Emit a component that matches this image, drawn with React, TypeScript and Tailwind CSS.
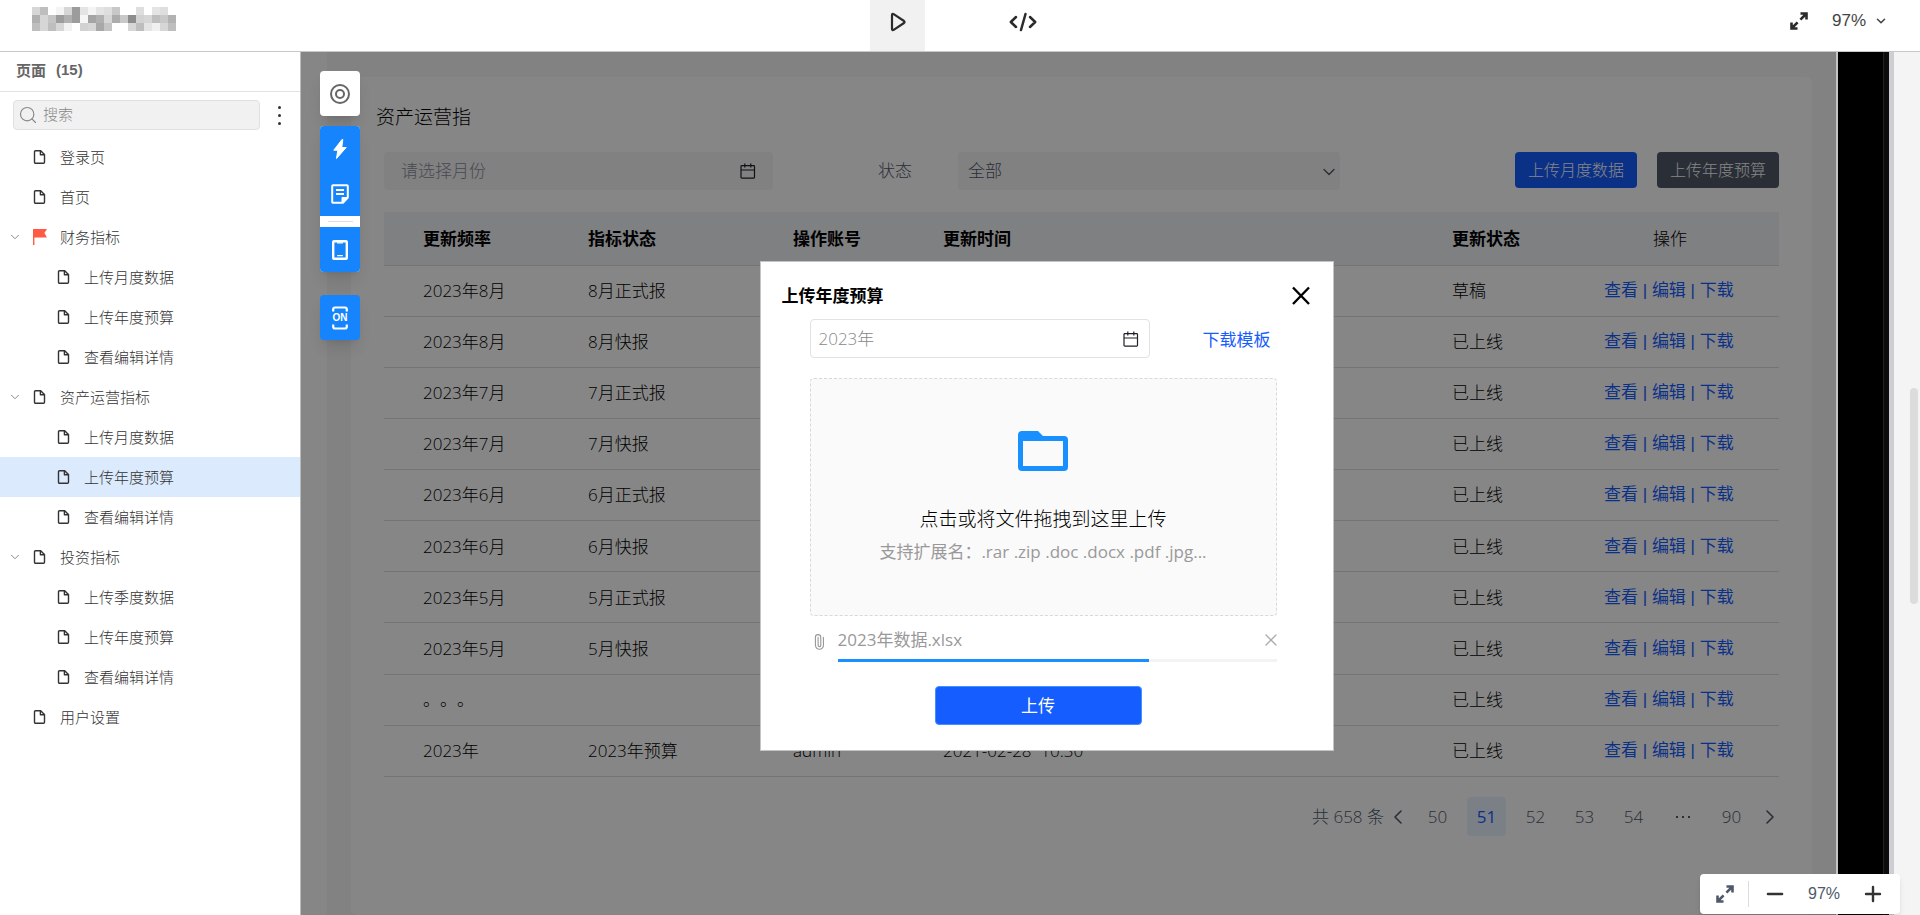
import { ChevronDown, ChevronLeft, ChevronRight, Minus, Paperclip, Plus, Search, X } from 'lucide-react';

type PageItem = {
  name: string;
  level: number;
  open?: boolean;
  flag?: boolean;
  active?: boolean;
};

const pages: PageItem[] = [
  { name: '登录页', level: 0 },
  { name: '首页', level: 0 },
  { name: '财务指标', level: 0, open: true, flag: true },
  { name: '上传月度数据', level: 1 },
  { name: '上传年度预算', level: 1 },
  { name: '查看编辑详情', level: 1 },
  { name: '资产运营指标', level: 0, open: true },
  { name: '上传月度数据', level: 1 },
  { name: '上传年度预算', level: 1, active: true },
  { name: '查看编辑详情', level: 1 },
  { name: '投资指标', level: 0, open: true },
  { name: '上传季度数据', level: 1 },
  { name: '上传年度预算', level: 1 },
  { name: '查看编辑详情', level: 1 },
  { name: '用户设置', level: 0 },
];

const rows = [
  { period: '2023年8月', type: '8月正式报', status: '草稿' },
  { period: '2023年8月', type: '8月快报', status: '已上线' },
  { period: '2023年7月', type: '7月正式报', status: '已上线' },
  { period: '2023年7月', type: '7月快报', status: '已上线' },
  { period: '2023年6月', type: '6月正式报', status: '已上线' },
  { period: '2023年6月', type: '6月快报', status: '已上线' },
  { period: '2023年5月', type: '5月正式报', status: '已上线' },
  { period: '2023年5月', type: '5月快报', status: '已上线' },
  { period: '。。。', type: '', status: '已上线' },
  { period: '2023年', type: '2023年预算', user: 'admin', time: '2021-02-28  10:30', status: '已上线' },
];

// grey level of each 8px tile in the masked project name
const mosaic = [
  [214, 190, 255, 244, 214, 156, 228, 244, 228, 222, 200, 255, 255, 222, 255, 228, 222, 255],
  [176, 214, 196, 156, 176, 156, 246, 164, 176, 214, 172, 200, 140, 210, 214, 190, 200, 178],
  [190, 214, 190, 214, 242, 255, 210, 214, 168, 196, 255, 255, 214, 190, 228, 240, 214, 190],
];

function FileIcon() {
  return (
    <svg viewBox="0 0 14 16" className="w-3.5 h-4 shrink-0" fill="none" stroke="#333" strokeWidth="1.4" strokeLinejoin="round">
      <path d="M3.500 1.800h5.200l3.800 3.600v7.900a1 1 0 0 1-1 1h-8a1 1 0 0 1-1-1V2.800a1 1 0 0 1 1-1z" />
      <path d="M8.400 2v3.800h3.800" />
    </svg>
  );
}

function FlagIcon() {
  return (
    <svg viewBox="0 0 16 16" className="w-4 h-4 shrink-0" fill="#ff5a43">
      <path d="M1 0h14l-2.600 4L15 8.400H2.400V16H1z" />
    </svg>
  );
}

function CalendarIcon() {
  return (
    <svg viewBox="0 0 16 16" className="w-4 h-4 shrink-0" fill="none" stroke="#1d2129" strokeWidth="1.2">
      <rect x="1" y="2.600" width="13.500" height="12.500" rx="0.8" />
      <path d="M1 7h13.500M4.800 0.500v4M10.800 0.500v4" />
    </svg>
  );
}

function ExpandIcon({ color }: { color: string }) {
  return (
    <svg viewBox="0 0 18 18" className="w-[18px] h-[18px]" fill="none" stroke={color} strokeWidth="2.6">
      <path d="M10.500 1.500h6v6M16 2l-5.600 5.600M7.500 16.500h-6v-6M2 16l5.600-5.600" />
    </svg>
  );
}

function TopBar() {
  return (
    <header className="flex items-start h-[52px] shrink-0 bg-white border-b border-[#c8c8c8]">
      <div className="flex-1 pl-8 pt-[7px]">
        <div className="w-36">
          {mosaic.map((line, y) => (
            <div key={y} className="flex">
              {line.map((v, x) => (
                <span key={x} className="w-2 h-2" style={{ backgroundColor: `rgb(${v},${v},${v})` }} />
              ))}
            </div>
          ))}
        </div>
      </div>
      <div className="flex gap-[70px] h-full">
        <button aria-label="预览" className="w-[55px] h-full pb-2 flex items-center justify-center bg-[#f1f1f1]">
          <svg viewBox="0 0 18 20" className="w-[18px] h-5" fill="none" stroke="#2b2b2b" strokeWidth="2.2" strokeLinejoin="round">
            <path d="M3 3.200Q3 1.200 4.700 2.200L15 9Q16.200 10 15 11L4.700 17.800Q3 18.800 3 16.800z" />
          </svg>
        </button>
        <button aria-label="代码" className="w-[55px] h-full pb-2 flex items-center justify-center">
          <svg viewBox="0 0 28 20" className="w-7 h-5" fill="none" stroke="#2b2b2b" strokeWidth="2.500" strokeLinecap="round" strokeLinejoin="round">
            <path d="M7 5L1.800 10L7 15M21 5l5.200 5L21 15M16.500 2l-4.500 16" />
          </svg>
        </button>
      </div>
      <div className="flex-1 flex justify-end items-center h-[42px] pr-8 text-[17px] text-[#444]">
        <ExpandIcon color="#2b2b2b" />
        <span className="ml-6 font-['Liberation_Sans',sans-serif]">97%</span>
        <ChevronDown className="w-3.5 h-3.5 ml-2" strokeWidth={2.600} />
      </div>
    </header>
  );
}

function Sidebar() {
  return (
    <aside className="w-[301px] shrink-0 bg-white border-r border-[#bbb] text-[15px] text-[#333]">
      <h2 className="h-10 pl-4 pb-0.5 flex items-center border-b border-[#e3e3e3] font-bold text-[#666] gap-2.5">
        <span>页面</span>
        <span className="font-['Liberation_Sans',sans-serif]">(15)</span>
      </h2>
      <div className="flex items-center pl-[13px] pt-2 mb-[7px] gap-[18px]">
        <label className="w-[247px] h-[30px] flex items-center gap-1 px-1 bg-[#f1f1f1] border border-[#e0e0e0] rounded-sm">
          <Search className="w-5 h-5 shrink-0 text-[#888]" strokeWidth={1.400} />
          <input aria-label="搜索" placeholder="搜索" className="w-full pl-px pb-0.5 outline-none font-light placeholder-[#888]" />
        </label>
        <button aria-label="更多" className="flex flex-col gap-[5px]">
          <span className="w-[3px] h-[3px] rounded-full bg-[#333]" />
          <span className="w-[3px] h-[3px] rounded-full bg-[#333]" />
          <span className="w-[3px] h-[3px] rounded-full bg-[#333]" />
        </button>
      </div>
      <nav>
        {pages.map((p, i) => (
          <a
            key={i}
            href="#"
            className={`flex items-center h-10 font-light ${p.level ? 'pl-14' : 'pl-2'} ${p.active ? 'bg-[#dbeafd]' : ''}`}
          >
            {p.level === 0 && (
              <span className="w-6 shrink-0">{p.open && <ChevronDown className="w-3.5 h-3.5 text-[#888]" strokeWidth={1.700} />}</span>
            )}
            <span className="w-7 shrink-0">{p.flag ? <FlagIcon /> : <FileIcon />}</span>
            {p.name}
          </a>
        ))}
      </nav>
    </aside>
  );
}

function IndicatorPage() {
  return (
    <div className="flex h-full bg-white">
      <div className="w-[26px] shrink-0" />
      <div className="flex-1 bg-[#f7f8fa] px-6 pt-[25px]">
        <main className="h-full bg-white rounded-md px-[33px] pt-6 text-[17px] font-light text-black">
          <h1 className="-ml-2 text-[19px] leading-8">资产运营指</h1>
          <div className="mt-[19px] flex items-center">
            <label className="w-[389px] h-[38px] px-[17px] flex items-center bg-[#f5f5f6] rounded-sm">
              <input aria-label="月份" placeholder="请选择月份" className="flex-1 outline-none placeholder-[#86909c]" />
              <CalendarIcon />
            </label>
            <label htmlFor="status" className="ml-[105px] w-20 text-[#4e5969]">状态</label>
            <div className="relative w-[382px]">
              <select id="status" className="w-full h-[38px] pl-2.5 appearance-none bg-[#f5f5f6] text-[#4e5969] rounded-sm">
                <option>全部</option>
              </select>
              <ChevronDown className="absolute right-px top-2.5 w-5 h-5 text-[#4e5969]" strokeWidth={1.600} />
            </div>
            <button className="ml-auto mb-0.5 w-[122px] h-9 bg-[#165dff] text-white text-[16px] rounded">上传月度数据</button>
            <button className="ml-5 mb-0.5 w-[122px] h-9 bg-[#4e5969] text-white text-[16px] rounded">上传年度预算</button>
          </div>
          <table className="mt-[22px] w-full h-[565px] table-fixed border-collapse text-left">
            <colgroup>
              <col className="w-[204px]" />
              <col className="w-[205px]" />
              <col className="w-[150px]" />
              <col />
              <col className="w-[152px]" />
              <col className="w-[175px]" />
            </colgroup>
            <thead>
              <tr className="h-[53px] bg-[#f2f3f5] border-b border-[#dcdde0]">
                <th className="pl-[39px]">更新频率</th>
                <th>指标状态</th>
                <th>操作账号</th>
                <th>更新时间</th>
                <th>更新状态</th>
                <th className="pl-[49px] font-light">操作</th>
              </tr>
            </thead>
            <tbody>
              {rows.map((r, i) => (
                <tr key={i} className="border-b border-[#dcdde0]">
                  <td className="pl-[39px] [text-spacing-trim:space-all]">{r.period}</td>
                  <td>{r.type}</td>
                  <td>{r.user}</td>
                  <td className="whitespace-pre">{r.time}</td>
                  <td>{r.status}</td>
                  <td className="text-[#165dff] font-normal whitespace-nowrap font-['Liberation_Sans','Noto_Sans_CJK_SC',sans-serif]">
                    <a href="#">查看</a> | <a href="#">编辑</a> | <a href="#">下载</a>
                  </td>
                </tr>
              ))}
            </tbody>
          </table>
          <div className="mt-5 flex items-center justify-end gap-2.5 text-[#4e5969]">
            <span className="-mr-1.5">共 658 条</span>
            <button aria-label="上一页" className="w-5 flex justify-center"><ChevronLeft className="w-6 h-6 shrink-0" strokeWidth={1.600} /></button>
            <button className="w-[39px] h-[39px]">50</button>
            <button className="w-[39px] h-[39px] rounded-sm bg-[#e8f3ff] text-[#165dff] font-normal">51</button>
            <button className="w-[39px] h-[39px]">52</button>
            <button className="w-[39px] h-[39px]">53</button>
            <button className="w-[39px] h-[39px]">54</button>
            <span className="w-[39px] flex justify-center gap-1">
              <i className="w-0.5 h-0.5 bg-[#4e5969]" />
              <i className="w-0.5 h-0.5 bg-[#4e5969]" />
              <i className="w-0.5 h-0.5 bg-[#4e5969]" />
            </span>
            <button className="w-[39px] h-[39px]">90</button>
            <button aria-label="下一页" className="w-[18px] flex justify-center"><ChevronRight className="w-6 h-6 shrink-0" strokeWidth={1.600} /></button>
          </div>
        </main>
      </div>
    </div>
  );
}

function UploadDialog() {
  return (
    <div role="dialog" aria-label="上传年度预算" className="w-[574px] pl-[21px] pr-5 pt-[19px] pb-[25px] bg-white border border-[#c4c4c4] text-[17px] font-light">
      <div className="flex items-center justify-between h-[30px]">
        <h2 className="font-bold text-black">上传年度预算</h2>
        <button aria-label="关闭">
          <svg viewBox="0 0 24 24" className="w-6 h-6" fill="none" stroke="#000" strokeWidth="2.4">
            <path d="M4 3.500L20 20M20 3.500L4 20" />
          </svg>
        </button>
      </div>
      <div className="pl-7 pr-9">
        <div className="mt-2 flex items-center justify-between pr-1.5">
          <label className="w-[340px] h-[39px] pl-2 pr-2.5 flex items-center border border-[#e2e2e2] rounded">
            <input aria-label="年份" defaultValue="2023年" className="flex-1 outline-none text-[#888]" />
            <CalendarIcon />
          </label>
          <a href="#" className="pt-0.5 text-[#165dff] font-normal">下载模板</a>
        </div>
        <button className="mt-5 w-full h-[238px] flex flex-col items-center bg-[#fafafa] border border-dashed border-[#d9d9d9] rounded">
          <svg viewBox="0 0 50 40" className="w-[50px] h-10 mt-[52px]" fill="#1890ff" fillRule="evenodd">
            <path d="M4 0h16l5 5h21a4 4 0 0 1 4 4v27a4 4 0 0 1-4 4H4a4 4 0 0 1-4-4V4a4 4 0 0 1 4-4zM5 10v25h40V10z" />
          </svg>
          <span className="mt-8 text-[19px] leading-8 text-black">点击或将文件拖拽到这里上传</span>
          <span className="leading-[34px] font-normal text-[#999]">支持扩展名：.rar .zip .doc .docx .pdf .jpg...</span>
        </button>
        <div className="flex pt-2">
          <Paperclip className="w-4 h-4 ml-px mr-[11px] mt-2.5 -rotate-45 text-[#999]" strokeWidth={1.700} />
          <div className="flex-1">
            <div className="flex items-center justify-between h-[31px] font-normal text-[#999]">
              2023年数据.xlsx
              <button aria-label="移除"><X className="w-5 h-5 -mr-1 text-[#aaa]" strokeWidth={1.500} /></button>
            </div>
            <div className="mt-1 h-[3px] bg-[#f3f3f3]">
              <div className="h-full bg-[#1890ff]" style={{ width: '71%' }} />
            </div>
          </div>
        </div>
        <button className="block mt-6 ml-[125px] w-[207px] h-[39px] bg-[#165dff] border border-[#3f92ff] text-white font-normal rounded">上传</button>
      </div>
    </div>
  );
}

function FloatingTools() {
  return (
    <div className="absolute left-[19px] top-[19px] w-10 flex flex-col">
      <button aria-label="定位" className="h-[45px] flex items-center justify-center bg-white rounded-sm shadow-lg">
        <svg viewBox="0 0 20 20" className="w-5 h-5" fill="none" stroke="#666" strokeWidth="2">
          <circle cx="10" cy="10" r="9" />
          <circle cx="10" cy="10" r="4" />
        </svg>
      </button>
      <div className="mt-2.5 flex flex-col bg-white rounded-sm shadow-lg overflow-hidden">
        <button aria-label="交互" className="h-[45px] flex items-center justify-center bg-[#1684fc]">
          <svg viewBox="0 0 14 20" className="w-3.5 h-5" fill="#fff">
            <path d="M9 0.500L0.800 11.200H4.800L3.500 19.500L13.200 8.500H8.800L9.800 0.500z" stroke="#fff" strokeLinejoin="round" />
          </svg>
        </button>
        <button aria-label="批注" className="h-[45px] flex items-center justify-center bg-[#1684fc]">
          <svg viewBox="0 0 18 20" className="w-[18px] h-5" fill="none" stroke="#fff" strokeWidth="2">
            <path d="M2 1.200h14a0.800 0.800 0 0 1 .8.800v11.500L12 18.800H2a0.800 0.800 0 0 1-.8-.8V2a0.800 0.800 0 0 1 .8-.8zM5 6h8M5 10h8" />
            <path d="M11 19v-5.500h6z" fill="#fff" strokeWidth="1" />
          </svg>
        </button>
        <span className="w-[25px] h-px my-[5px] self-center bg-[#ddd]" />
        <button aria-label="设备" className="h-[45px] flex items-center justify-center bg-[#1684fc]">
          <svg viewBox="0 0 16 20" className="w-4 h-5" fill="none" stroke="#fff" strokeWidth="2.400">
            <rect x="1.200" y="1.200" width="13.600" height="17.600" rx="0.8" />
            <path d="M5 2.800h6M5.200 15.700h5.600" strokeWidth="1.200" />
          </svg>
        </button>
      </div>
      <button className="relative mt-[23px] h-[45px] flex items-center justify-center gap-0.5 bg-[#1684fc] rounded-sm shadow-lg text-white text-[10px] font-bold font-['Liberation_Sans',sans-serif]">
        ON
        <svg viewBox="0 0 16 24" className="absolute w-4 h-6" fill="none" stroke="#fff" strokeWidth="2.200">
          <path d="M1.200 5.500V3.500Q1.200 1.500 3 1.500H13Q14.800 1.500 14.800 3.500V5.500M1.200 18.500v2Q1.200 22.500 3 22.500H13Q14.800 22.500 14.800 20.500V18.500" />
        </svg>
      </button>
    </div>
  );
}

export default function App() {
  return (
    <div className="h-screen flex flex-col overflow-hidden font-['Open_Sans','Noto_Sans_CJK_SC',sans-serif]">
      <TopBar />
      <div className="flex-1 min-h-0 flex">
        <Sidebar />
        <div className="relative flex-1 min-w-0 flex bg-[#f4f4f4]">
          <div className="relative flex-1 min-w-0 overflow-hidden border-r-2 border-[#c4c4c6]">
            <IndicatorPage />
            {/* mask and dialog */}
            <div className="absolute inset-0 flex items-center justify-center pr-11 pt-[45px] bg-black/[.475]">
              <UploadDialog />
            </div>
            <FloatingTools />
          </div>
          <div className="w-[46px] bg-black border-r border-[#222]" />
          <div className="w-[5px] bg-[#0c0c0c]" />
          <div className="w-[5px] bg-[#cecdd3]" />
          <div className="w-[26px] flex justify-end">
            <div className="mt-[336px] mr-0.5 w-2 h-[216px] rounded-full bg-[#dcdcdc]" />
          </div>
          <div className="absolute right-5 bottom-px w-[200px] h-10 flex items-center justify-between pl-4 pr-[15px] bg-white rounded shadow-md text-[#4e5969]">
            <button aria-label="全屏"><ExpandIcon color="#4e5969" /></button>
            <span className="w-px h-[26px] bg-[#ddd]" />
            <button aria-label="缩小"><Minus className="w-6 h-6 text-[#333]" strokeWidth={2.600} /></button>
            <span className="w-[46px] text-center text-[16px] font-['Liberation_Sans',sans-serif]">97%</span>
            <button aria-label="放大"><Plus className="w-6 h-6 text-[#333]" strokeWidth={2.400} /></button>
          </div>
        </div>
      </div>
    </div>
  );
}
